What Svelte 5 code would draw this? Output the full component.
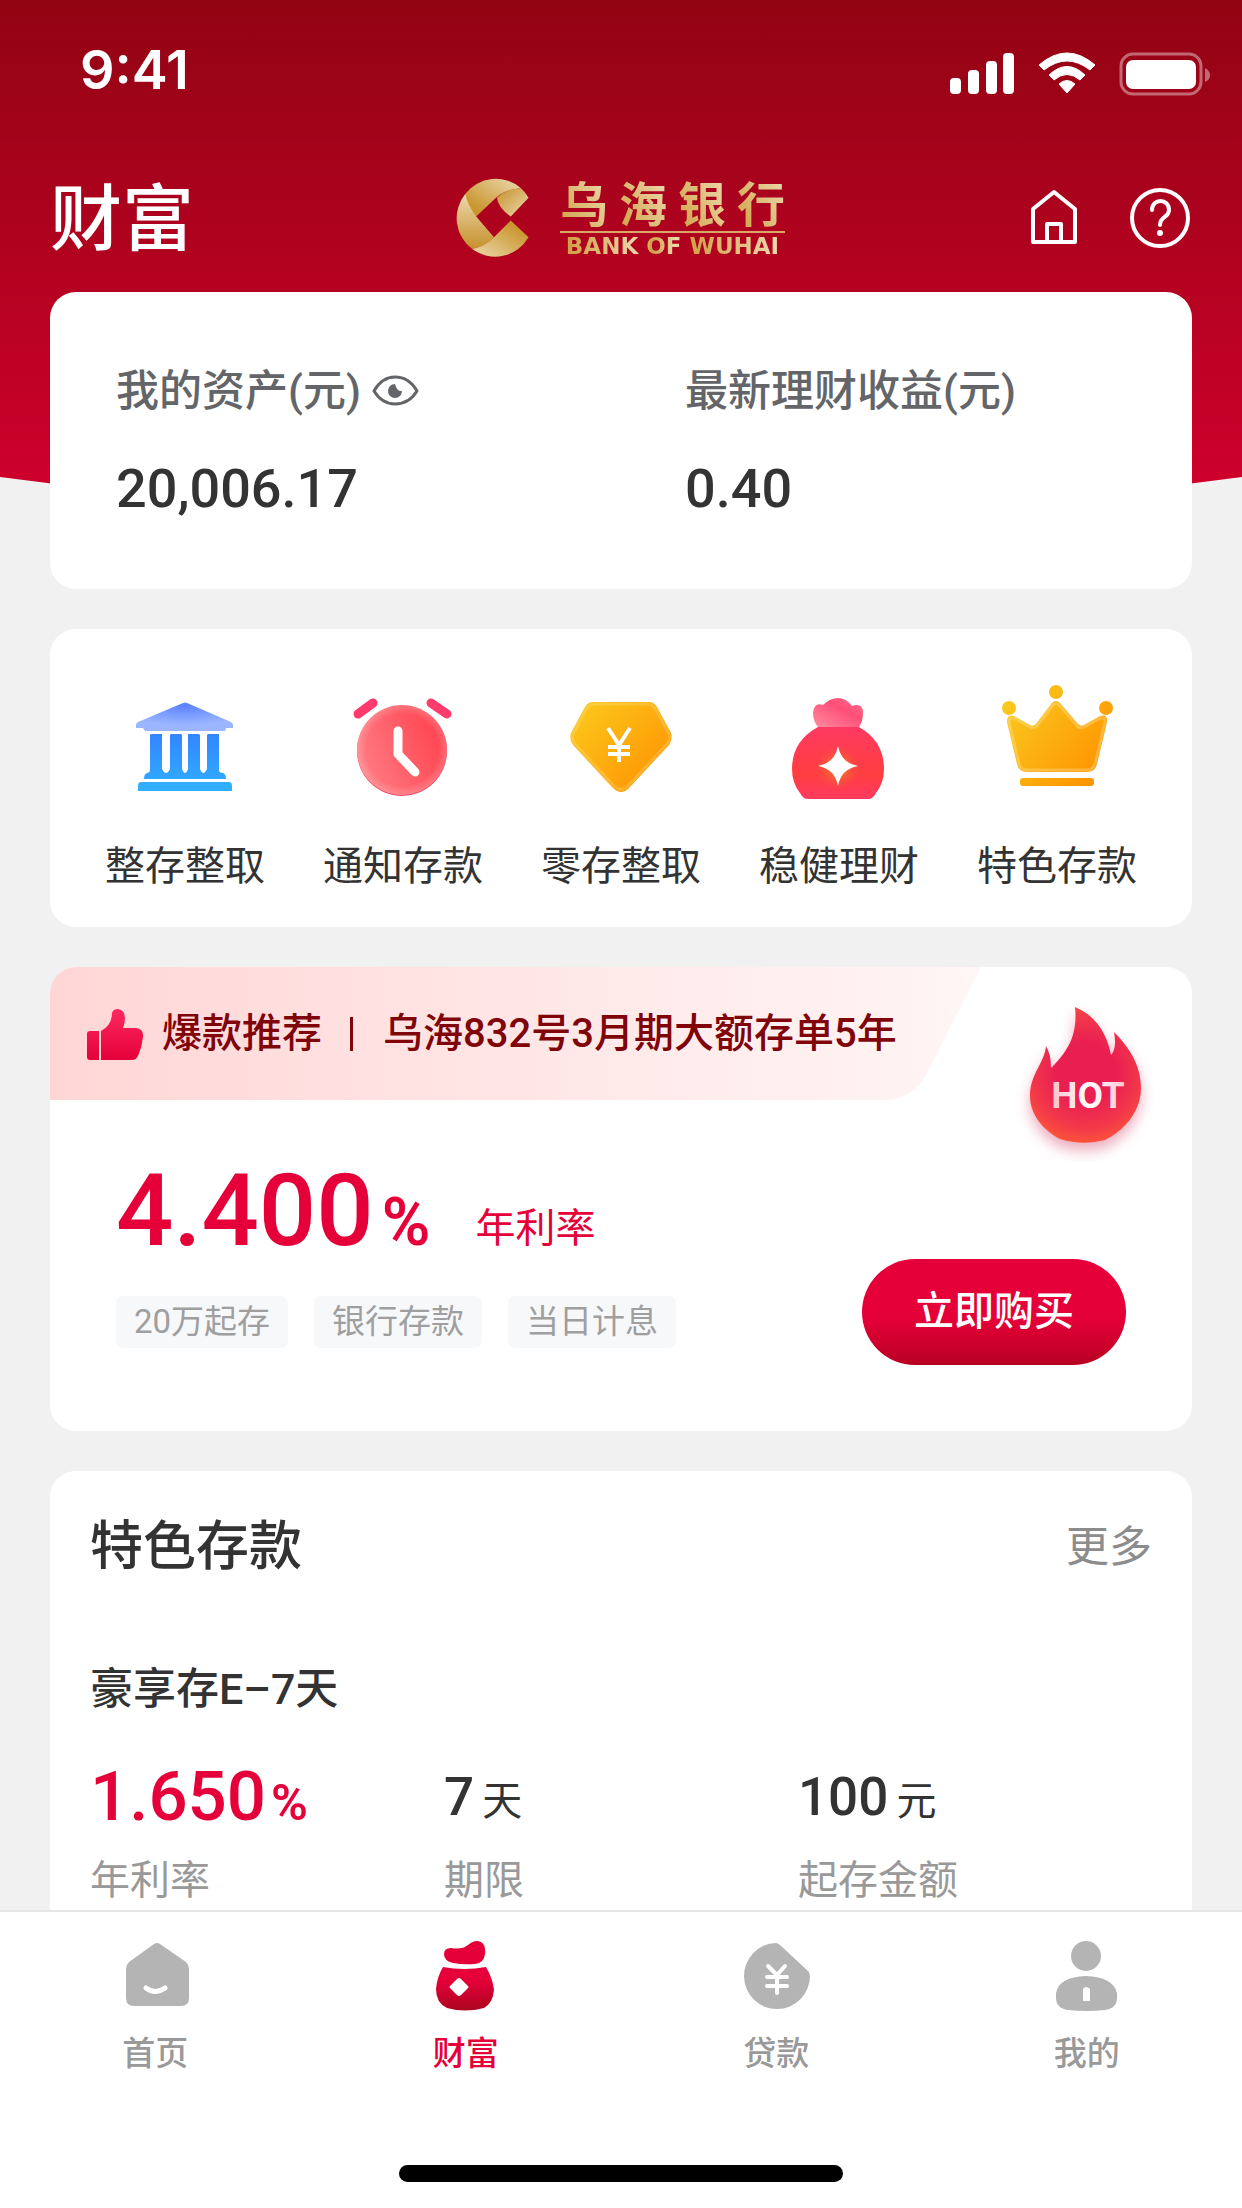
<script>
  let hidden = $state(false);

  const shortcuts = [
    { icon: 'bank', label: '整存整取' },
    { icon: 'clock', label: '通知存款' },
    { icon: 'gem', label: '零存整取' },
    { icon: 'pouch', label: '稳健理财' },
    { icon: 'crown', label: '特色存款' }
  ];
  const tags = ['20万起存', '银行存款', '当日计息'];
  const tabs = [
    { icon: 'home', label: '首页' },
    { icon: 'wealth', label: '财富', active: true },
    { icon: 'loan', label: '贷款' },
    { icon: 'me', label: '我的' }
  ];
</script>

<div class="app">
  <div class="content">
    <svg class="backdrop" viewBox="0 0 1242 520" preserveAspectRatio="none" aria-hidden="true">
      <defs>
        <linearGradient id="bg" x1="0" y1="0" x2="0" y2="1">
          <stop offset="0" stop-color="#920413" />
          <stop offset="1" stop-color="#d2002d" />
        </linearGradient>
      </defs>
      <path d="M0 0H1242V477Q621 560 0 477Z" fill="url(#bg)" />
    </svg>

    <div class="status">
      <span class="time">9:41</span>
      <svg width="262" height="46" viewBox="949 51 262 46" fill="#fff" aria-hidden="true">
        <rect x="950" y="78" width="11" height="16" rx="4" />
        <rect x="968" y="70" width="11" height="24" rx="4" />
        <rect x="986" y="61" width="11" height="33" rx="4" />
        <rect x="1003" y="53" width="11" height="41" rx="4" />
        <path d="M1039 65Q1067 41 1095 65L1090 70Q1067 52 1044 70Z" stroke="#fff" stroke-linejoin="round" />
        <path d="M1049 75Q1067 58 1085 75L1080 80Q1067 69 1054 80Z" stroke="#fff" stroke-linejoin="round" />
        <path d="M1059 84Q1067 77 1075 84L1067 93Z" stroke="#fff" stroke-linejoin="round" />
        <rect x="1121" y="54" width="80" height="40" rx="12" fill="none" stroke="#fff" stroke-width="3" opacity=".4" />
        <rect x="1126" y="60" width="70" height="29" rx="7" />
        <path d="M1205 68Q1210 71 1210 75Q1210 80 1205 82Z" opacity=".4" />
      </svg>
    </div>

    <header>
      <h1>财富</h1>
      <div class="brand">
        <svg width="74" height="80" viewBox="458 178 74 81" aria-hidden="true">
          <defs>
            <linearGradient id="g1" x1="0" y1="0" x2="0" y2="1"><stop offset="0" stop-color="#ecd9ae" /><stop offset="1" stop-color="#c6902a" /></linearGradient>
            <linearGradient id="g2" x1="1" y1="0" x2="0" y2="1"><stop offset="0" stop-color="#ecd9ae" /><stop offset=".8" stop-color="#c9962f" /></linearGradient>
            <linearGradient id="g3" x1="0" y1="0" x2="1" y2="1"><stop offset="0" stop-color="#c6902a" /><stop offset="1" stop-color="#ecd9ae" /></linearGradient>
            <linearGradient id="g4" x1="0" y1="1" x2="1" y2="0"><stop offset="0" stop-color="#ecd9ae" /><stop offset=".8" stop-color="#c9962f" /></linearGradient>
          </defs>
          <path d="M467 194A39 39 0 0 1 523 188Q507 190 498 198L478 217Q468 206 467 194Z" fill="url(#g2)" />
          <path d="M523 188Q528 192 531 198L513 217Q500 208 499 198Q508 189 523 188Z" fill="url(#g3)" />
          <path d="M467 194Q469 205 478 217L496 238Q489 247 474 250A39 39 0 0 1 467 194Z" fill="url(#g1)" />
          <path d="M474 250Q488 247 496 238L513 221L531 238A39 39 0 0 1 474 250Z" fill="url(#g4)" />
        </svg>
        <div class="wordmark">
          <div class="cn"><span>乌</span><span>海</span><span>银</span><span>行</span></div>
          <div class="en"><span>BANK OF WUHAI</span></div>
        </div>
      </div>
      <div class="tools">
        <button aria-label="首页">
          <svg width="48" height="60" viewBox="1029 188 48 60" fill="none" stroke="#fff" stroke-width="4" stroke-linejoin="round">
            <path d="M1032 209L1053 192L1074 209V242H1032Z" />
            <path d="M1046 242V224H1060V242" />
          </svg>
        </button>
        <button aria-label="帮助">
          <svg width="62" height="62" viewBox="1128 188 62 62" fill="none" stroke="#fff" stroke-width="4" stroke-linecap="round">
            <circle cx="1159" cy="219" r="28" />
            <path d="M1151 211C1151 199 1168 199 1168 211C1168 219 1159 217 1159 226" />
            <circle cx="1159" cy="234" r="3" fill="#fff" stroke="none" />
          </svg>
        </button>
      </div>
    </header>

    <main>
      <section class="card assets">
        <div>
          <div class="label">
            我的资产(元)
            <button aria-label="显示或隐藏金额" onclick={() => (hidden = !hidden)}>
              <svg width="48" height="34" viewBox="372 374 48 34" fill="none" stroke="#636569" stroke-width="3">
                <path d="M375 391Q383 377 396 377Q410 377 418 391Q410 404 396 404Q383 404 375 391Z" stroke-linejoin="round" />
                <path d="M396 384A7 7 0 1 0 403 391Q398 392 396 384Z" fill="#636569" stroke="none" />
              </svg>
            </button>
          </div>
          <div class="amount">{hidden ? '****' : '20,006.17'}</div>
        </div>
        <div>
          <div class="label">最新理财收益(元)</div>
          <div class="amount">{hidden ? '****' : '0.40'}</div>
        </div>
      </section>

      <nav class="card shortcuts">
        {#each shortcuts as s}
          <a href="#{s.icon}">
            {#if s.icon === 'bank'}
              <svg width="120" height="120" viewBox="125 680 120 120" aria-hidden="true">
                <defs>
                  <radialGradient id="roof" cx=".5" cy=".1" r=".7"><stop offset="0" stop-color="#5c80ff" /><stop offset=".5" stop-color="#7b9dff" /><stop offset="1" stop-color="#9bb6ff" /></radialGradient>
                  <linearGradient id="cols" x1="0" y1="734" x2="0" y2="780" gradientUnits="userSpaceOnUse"><stop offset="0" stop-color="#3385ff" /><stop offset="1" stop-color="#30a8ff" /></linearGradient>
                </defs>
                <path d="M183 703Q185 702 187 703L231 722Q233 723 233 725V728H226L225 731H145L143 728H136V725Q136 723 138 722Z" fill="url(#roof)" />
                <path d="M151 734H162V769Q166 777 170 769V735L171 734H181L182 735V769Q185 777 188 769V734H199L200 735V769Q203 777 207 769V735L208 734H219V770Q219 773 223 773Q226 774 226 779H144Q144 774 147 773Q150 773 150 769V735Z" fill="url(#cols)" />
                <path d="M138 791V786Q138 782 141 782H229Q232 782 232 786V791Z" fill="#31aeff" />
              </svg>
            {:else if s.icon === 'clock'}
              <svg width="120" height="120" viewBox="343 680 120 120" aria-hidden="true">
                <defs>
                  <linearGradient id="dial" x1="0" y1=".8" x2="1" y2=".4"><stop offset="0" stop-color="#ff8087" /><stop offset="1" stop-color="#ff4350" /></linearGradient>
                  <radialGradient id="rim" cx=".5" cy=".5" r=".5"><stop offset=".8" stop-color="#fff" stop-opacity="0" /><stop offset="1" stop-color="#fff" stop-opacity=".2" /></radialGradient>
                </defs>
                <circle cx="402" cy="751" r="45" fill="#f04460" />
                <circle cx="402" cy="750" r="45" fill="url(#dial)" />
                <circle cx="402" cy="750" r="45" fill="url(#rim)" />
                <g fill="none" stroke-width="9" stroke-linecap="round" stroke-linejoin="round">
                  <path d="M398 731V754L415 772" stroke="#fff" />
                  <path d="M373 703L358 714M431 703L447 714" stroke="#ff3a6d" />
                </g>
              </svg>
            {:else if s.icon === 'gem'}
              <svg width="120" height="120" viewBox="561 680 120 120" aria-hidden="true">
                <defs>
                  <linearGradient id="gem" x1="0" y1=".1" x2=".8" y2=".8"><stop offset="0" stop-color="#fbc81c" /><stop offset="1" stop-color="#ff9a05" /></linearGradient>
                </defs>
                <path d="M593 702H649Q654 702 657 707L671 733Q673 739 669 745L629 788Q621 796 613 788L573 745Q569 739 571 733L585 707Q588 702 593 702Z" fill="url(#gem)" />
                <path d="M594 704H648Q652 704 655 708L669 734Q671 739 667 744L628 786Q621 793 614 786L575 744Q571 739 573 734L587 708Q590 704 594 704Z" fill="none" stroke="#ffe28a" stroke-width="3" opacity=".3" />
                <path d="M608 728L619 745L630 728M619 744V762M608 747H630M608 754H630" fill="none" stroke="#fff" stroke-width="4" />
              </svg>
            {:else if s.icon === 'pouch'}
              <svg width="120" height="120" viewBox="779 680 120 120" aria-hidden="true">
                <defs>
                  <linearGradient id="neck" x1="0" y1="1" x2="1" y2="0"><stop offset="0" stop-color="#ff8da0" /><stop offset=".6" stop-color="#ff4f78" /><stop offset="1" stop-color="#ff6d8c" /></linearGradient>
                  <linearGradient id="sack" x1="0" y1="0" x2="0" y2="1"><stop offset="0" stop-color="#ff3a62" /><stop offset=".65" stop-color="#ff3e40" /><stop offset="1" stop-color="#ff3a60" /></linearGradient>
                  <radialGradient id="glow"><stop offset="0" stop-color="#f08a30" /><stop offset="1" stop-color="#f05a30" stop-opacity="0" /></radialGradient>
                </defs>
                <path d="M818 727Q813 721 813 713Q814 702 823 705Q830 698 838 698Q846 698 852 706Q863 702 863 713Q863 721 859 727Z" fill="url(#neck)" />
                <path d="M818 727H859Q884 741 884 769Q884 783 876 793Q873 799 868 799H808Q803 799 800 793Q792 783 792 769Q792 741 818 727Z" fill="url(#sack)" />
                <circle cx="838" cy="768" r="22" fill="url(#glow)" />
                <path d="M838 746Q841 763 858 766Q841 769 838 786Q835 769 818 766Q835 763 838 746Z" fill="#fff" />
              </svg>
            {:else}
              <svg width="120" height="120" viewBox="997 680 120 120" aria-hidden="true">
                <defs>
                  <linearGradient id="crown" gradientUnits="userSpaceOnUse" x1="1005" y1="700" x2="1095" y2="770"><stop offset="0" stop-color="#f9ca1f" /><stop offset="1" stop-color="#ff9600" /></linearGradient>
                </defs>
                <g fill="url(#crown)">
                  <circle cx="1056" cy="692" r="7" />
                  <circle cx="1009" cy="708" r="7" />
                  <circle cx="1106" cy="708" r="7" />
                  <path d="M1007 722Q1007 714 1014 716L1030 725Q1033 727 1036 724L1052 703Q1056 699 1060 703L1078 724Q1081 727 1084 725L1100 716Q1108 714 1107 722L1097 764Q1095 772 1087 772H1027Q1019 772 1017 764Z" />
                  <rect x="1020" y="778" width="74" height="8" rx="3" />
                </g>
                <path d="M1009 722Q1009 717 1014 718L1030 727Q1034 729 1037 726L1053 705Q1056 702 1059 705L1077 726Q1080 729 1084 727L1100 718Q1106 717 1105 722L1095 764Q1093 770 1087 770H1027Q1021 770 1019 764Z" fill="none" stroke="#ffe9a8" stroke-width="3" opacity=".35" />
              </svg>
            {/if}
            <span>{s.label}</span>
          </a>
        {/each}
      </nav>

      <section class="card promo">
        <div class="banner">
          <svg class="ribbon" width="931" height="133" viewBox="0 0 931 133" aria-hidden="true">
            <defs><linearGradient id="ribbon"><stop offset="0" stop-color="#ffd6d6" /><stop offset="1" stop-color="#fff6f5" /></linearGradient></defs>
            <path d="M0 0H931L876 108Q863 133 833 133H0Z" fill="url(#ribbon)" />
          </svg>
          <svg width="58" height="54" viewBox="86 1006 58 54" aria-hidden="true">
            <defs><linearGradient id="thumb" x1="0" y1="0" x2="0" y2="1"><stop offset="0" stop-color="#ff2a60" /><stop offset="1" stop-color="#e4003a" /></linearGradient></defs>
            <path d="M87 1033Q87 1030 90 1030H99V1059H90Q87 1059 87 1056ZM101 1030Q112 1024 112 1012Q113 1008 118 1008Q125 1009 125 1017Q125 1022 123 1027H136Q144 1028 143 1036Q142 1046 138 1055Q136 1059 132 1059H101Z" fill="url(#thumb)" />
          </svg>
          <strong>爆款推荐</strong>
          <i></i>
          <strong>乌海832号3月期大额存单5年</strong>
        </div>
        <svg class="hot" width="140" height="170" viewBox="1015 992 140 170" role="img" aria-label="HOT">
          <defs>
            <radialGradient id="flame" gradientUnits="userSpaceOnUse" cx="1086" cy="1072" r="76"><stop offset=".4" stop-color="#e91f52" /><stop offset=".75" stop-color="#f33a49" /><stop offset="1" stop-color="#ff5a36" /></radialGradient>
            <linearGradient id="hot"><stop offset="0" stop-color="#ffc0cd" /><stop offset=".5" stop-color="#fff" /><stop offset="1" stop-color="#ffc8d2" /></linearGradient>
          </defs>
          <path class="flame" d="M1075 1007C1098 1016 1108 1038 1111 1055Q1117 1049 1114 1032C1130 1048 1141 1066 1141 1088C1141 1113 1122 1132 1105 1140Q1083 1146 1060 1139C1045 1131 1030 1116 1030 1096C1030 1074 1044 1064 1046 1046Q1051 1054 1051 1068C1067 1052 1078 1036 1075 1007Z" fill="url(#flame)" />
          <text x="1088" y="1108" text-anchor="middle" fill="url(#hot)">HOT</text>
        </svg>
        <div class="offer">
          <div class="terms">
            <div class="rate"><b>4.400</b><em>%</em><span>年利率</span></div>
            <ul>
              {#each tags as t}<li>{t}</li>{/each}
            </ul>
          </div>
          <button class="buy">立即购买</button>
        </div>
      </section>

      <section class="card featured">
        <div class="head">
          <h2>特色存款</h2>
          <a href="#more">更多</a>
        </div>
        <h3>豪享存E–7天</h3>
        <div class="stats">
          <div><p class="red"><b>1.650</b><em>%</em></p><span>年利率</span></div>
          <div><p><b>7</b><small>天</small></p><span>期限</span></div>
          <div><p><b>100</b><small>元</small></p><span>起存金额</span></div>
        </div>
      </section>
    </main>
  </div>

  <footer>
    <nav>
      {#each tabs as t}
        <a href="#{t.icon}" class:active={t.active}>
          {#if t.icon === 'home'}
            <svg width="72" height="72" viewBox="119 1940 72 72" aria-hidden="true">
              <path d="M154 1944Q157 1942 160 1944L186 1962Q189 1965 189 1969V1998Q189 2006 181 2006H134Q126 2006 126 1998V1969Q126 1965 129 1962Z" fill="#b4b4b4" />
              <path d="M146 1988Q155 1995 165 1988" fill="none" stroke="#fff" stroke-width="5" stroke-linecap="round" />
            </svg>
          {:else if t.icon === 'wealth'}
            <svg width="72" height="72" viewBox="430 1940 72 72" aria-hidden="true">
              <defs><linearGradient id="bag" x1="0" y1="0" x2="0" y2="1"><stop offset=".3" stop-color="#e60039" /><stop offset="1" stop-color="#ac0520" /></linearGradient></defs>
              <path d="M444 1954Q444 1948 451 1948Q462 1950 468 1945Q475 1939 481 1942Q486 1945 485 1954Q484 1963 475 1964Q463 1965 453 1963Q444 1961 444 1954Z" fill="#e60039" />
              <path d="M443 1967Q464 1971 486 1967Q493 1979 494 1990Q493 2003 484 2008Q465 2013 447 2008Q436 2003 436 1989Q437 1977 443 1967ZM457 1979Q459 1977 461 1979L468 1986Q469 1987 468 1988L461 1995Q459 1997 457 1995L450 1988Q449 1987 450 1986Z" fill="url(#bag)" fill-rule="evenodd" />
            </svg>
          {:else if t.icon === 'loan'}
            <svg width="72" height="72" viewBox="740 1940 72 72" aria-hidden="true">
              <path d="M776 1943Q778 1943 780 1945L808 1971Q810 1973 810 1976A33 33 0 1 1 776 1943Z" fill="#b4b4b4" />
              <path d="M768 1966L777 1975L785 1966M777 1975V1993M767 1977H787M767 1986H787" fill="none" stroke="#fff" stroke-width="4" stroke-linecap="round" />
            </svg>
          {:else}
            <svg width="72" height="72" viewBox="1051 1940 72 72" fill="#b4b4b4" aria-hidden="true">
              <circle cx="1086" cy="1956" r="15" />
              <path d="M1056 1993Q1059 1977 1086 1976Q1113 1977 1117 1993V1998Q1117 2008 1105 2010Q1086 2012 1068 2010Q1056 2008 1056 1998Z" />
              <path d="M1083 2001V1989Q1086 1985 1090 1989V2001Z" fill="#fff" />
            </svg>
          {/if}
          <span>{t.label}</span>
        </a>
      {/each}
    </nav>
    <div class="indicator"></div>
  </footer>
</div>

<style>
  :global(body) { margin: 0; background: #f1f1f1; }
  .app {
    height: 100vh;
    display: flex;
    flex-direction: column;
    overflow: hidden;
    color: #333;
    font-family: Roboto, "Noto Sans CJK SC", sans-serif;
  }
  h1, h2, h3, p, ul { margin: 0; padding: 0; font-weight: 500; }
  a { color: inherit; text-decoration: none; }
  button { border: 0; padding: 0; background: none; font: inherit; color: inherit; cursor: pointer; }
  svg { display: block; flex: none; }
  em, i { font-style: normal; }

  .content { flex: 1; min-height: 0; position: relative; overflow-y: auto; scrollbar-width: none; }
  .backdrop { position: absolute; top: 0; left: 0; width: 100%; height: 520px; }
  .status, header, main { position: relative; }
  .status {
    display: flex;
    justify-content: space-between;
    align-items: center;
    height: 168px;
    padding: 0 31px 20px 80px;
    box-sizing: border-box;
  }
  .time { color: #fff; font: 600 54px/60px Inter, sans-serif; padding-bottom: 8px; }
  header {
    display: grid;
    grid-template-columns: 1fr auto 1fr;
    align-items: center;
    height: 100px;
    padding: 0 51px 0 50px;
    color: #fff;
  }
  h1 { padding-top: 4px; font-size: 72px; line-height: 96px; }
  .brand { display: flex; align-items: center; gap: 30px; }
  .wordmark span {
    background: linear-gradient(60deg, #cf9f42, #ecd9ae);
    background-clip: text;
    color: transparent;
  }
  .cn { display: flex; justify-content: space-between; gap: 11px; padding-top: 4px; font-size: 48px; line-height: 50px; font-weight: 700; }
  .en { border-top: 2px solid #d9a766; text-align: center; font: 700 23px/26px "DejaVu Sans", sans-serif; }
  .en span { background-image: linear-gradient(90deg, #cf9f42, #ecd9ae 35%, #cf9f42 40%, #ecd9ae 52%, #cf9f42 56%, #ecd9ae); }
  .tools { display: flex; justify-content: flex-end; align-items: center; gap: 51px; }

  main { display: flex; flex-direction: column; gap: 40px; padding: 24px 50px 0; }
  .card { background: #fff; border-radius: 26px; }

  .assets { display: grid; grid-template-columns: 1fr 1fr; gap: 128px; padding: 69px 66px 70px; }
  .label { display: flex; align-items: center; gap: 10px; color: #636569; font-size: 43px; font-weight: 500; line-height: 60px; white-space: nowrap; }
  .amount { margin-top: 38px; font-size: 54px; font-weight: 500; line-height: 60px; }

  .shortcuts { display: grid; grid-template-columns: repeat(5, 1fr); padding: 51px 26px 35px; }
  .shortcuts a { display: flex; flex-direction: column; align-items: center; gap: 42px; font-size: 40px; line-height: 50px; }

  .promo { position: relative; overflow: hidden; }
  .banner { position: relative; display: flex; align-items: center; height: 133px; padding-left: 36px; color: #7f050b; font-size: 40px; line-height: 50px; }
  .banner > :not(.ribbon) { position: relative; }
  .banner strong { font-weight: 500; }
  .banner svg + strong { margin-left: 18px; }
  .banner > .ribbon { position: absolute; top: 0; left: 0; }
  .banner i { width: 3px; height: 34px; margin: 0 30px 0 28px; background: #7f050b; }
  .hot { position: absolute; top: 25px; right: 37px; }
  .flame { filter: drop-shadow(0 8px 7px rgba(200, 20, 70, .35)); }
  .hot text { font: 700 37px Roboto, sans-serif; }
  .offer { display: flex; justify-content: space-between; align-items: flex-end; padding: 61px 66px 66px; }
  .terms { padding-bottom: 17px; }
  .rate { display: flex; align-items: baseline; color: #e60039; font-size: 40px; line-height: 64px; }
  .rate b { font-size: 101px; font-weight: 500; line-height: 100px; }
  .rate em { margin-left: 8px; font-size: 66px; font-weight: 600; }
  .rate span { align-self: flex-end; margin-left: 45px; }
  ul { display: flex; gap: 26px; margin-top: 35px; list-style: none; }
  li { padding: 0 18px; border-radius: 7px; background: #f7f8fa; color: #9f9f9f; font-size: 33px; font-weight: 400; line-height: 52px; }
  .buy {
    padding: 0 52px;
    border-radius: 53px;
    background: linear-gradient(#e60039 55%, #b80022);
    color: #fff;
    font-size: 40px;
    font-weight: 500;
    line-height: 106px;
  }

  .featured { padding: 40px 40px 60px; }
  .head { display: flex; justify-content: space-between; align-items: center; }
  .head a { color: #8c8c8c; font-size: 43px; line-height: 60px; }
  h2 { font-size: 53px; line-height: 72px; }
  h3 { margin-top: 76px; font-size: 43px; line-height: 60px; }
  .stats { display: grid; grid-template-columns: repeat(3, 1fr); margin-top: 38px; }
  .stats p { display: flex; align-items: baseline; gap: 8px; line-height: 80px; }
  .stats b { font-size: 53px; font-weight: 500; }
  .stats small { font-size: 40px; font-weight: 400; line-height: 50px; }
  .stats .red { gap: 5px; color: #e60039; }
  .stats .red b { font-size: 69px; }
  .stats em { font-size: 50px; font-weight: 600; line-height: 60px; }
  .stats span { display: block; margin-top: 19px; color: #999; font-size: 40px; line-height: 50px; }

  footer { flex: none; border-top: 2px solid #e6e6e6; background: #fff; padding: 28px 0 26px; }
  footer nav { display: grid; grid-template-columns: repeat(4, 1fr); }
  footer a { display: flex; flex-direction: column; align-items: center; gap: 22px; color: #999; font-size: 33px; font-weight: 500; line-height: 40px; }
  footer .active { color: #e60039; }
  .indicator { width: 444px; height: 17px; margin: 91px auto 0; border-radius: 9px; background: #000; }
</style>
